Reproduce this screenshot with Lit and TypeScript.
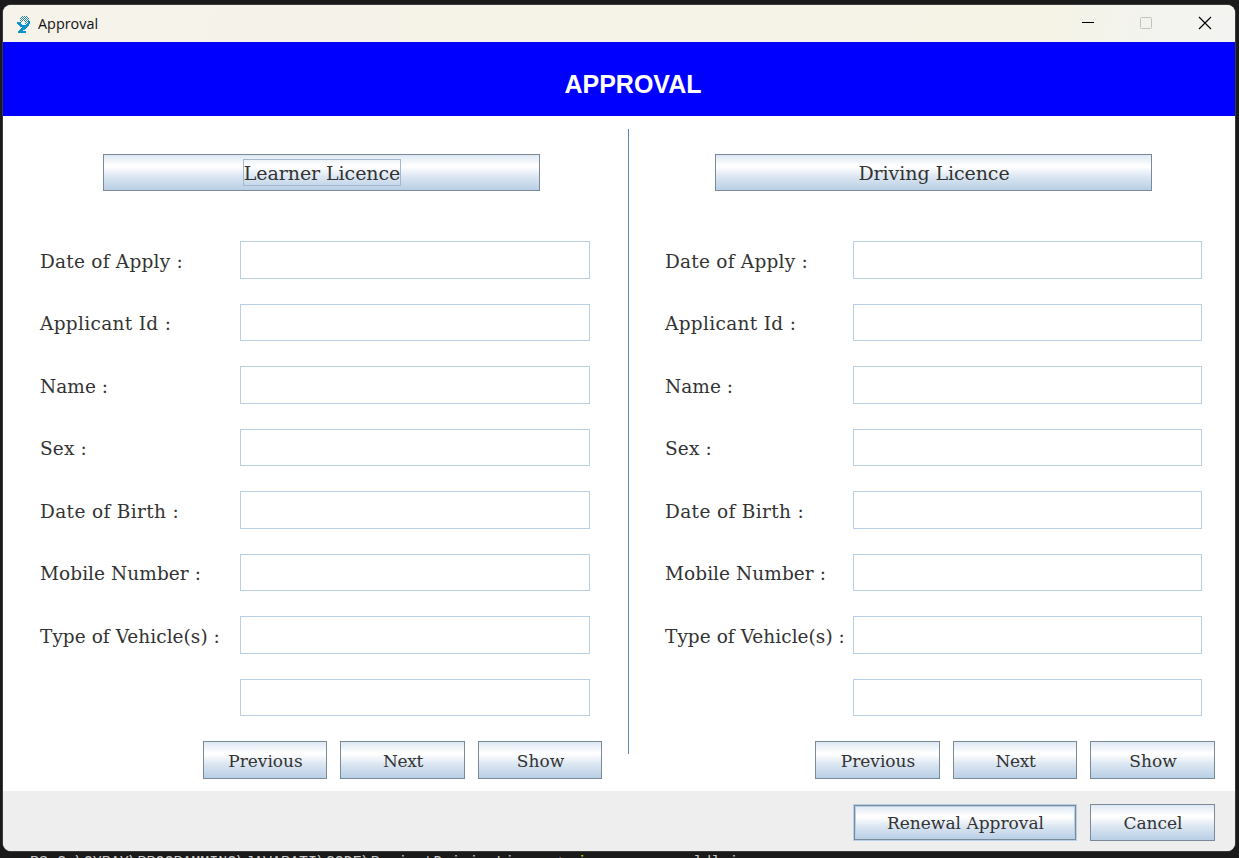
import { LitElement, html, css, svg } from "lit";
import { customElement, property } from "lit/decorators.js";

interface Fit { text: string; ls: number }

const LABELS: Fit[] = [
  { text: "Date of Apply :", ls: 0.23 },
  { text: "Applicant Id :", ls: 0.32 },
  { text: "Name :", ls: 0.05 },
  { text: "Sex :", ls: 0.15 },
  { text: "Date of Birth :", ls: 0.36 },
  { text: "Mobile Number :", ls: 0.07 },
  { text: "Type of Vehicle(s) :", ls: 0.04 },
  { text: "", ls: 0 },
];

@customElement("swing-button")
export class SwingButton extends LitElement {
  @property() label = "";
  @property({ type: Boolean, reflect: true }) focused = false;
  @property({ type: Boolean, reflect: true }) primary = false;
  @property({ type: Number }) spacing = 0;
  static styles = css`
    :host { display: block; }
    .btn {
      box-sizing: border-box; width: 100%; height: 100%; margin: 0; padding: 0 0 0 1px;
      border: 1px solid #7a8a99; border-radius: 0;
      background: linear-gradient(180deg, #dde8f3 0%, #ffffff 30%, #ffffff 34%, #dbe6f2 62%, #b8cfe5 100%);
      display: flex; align-items: center; justify-content: center;
      font: var(--btn-size, 17px) "DejaVu Serif", serif; color: #333; white-space: nowrap;
    }
    :host([primary]) .btn { box-shadow: inset 0 0 0 1px #b8cfe5, 0 0 0 1px #b8cfe5; }
    .txt { line-height: 23px; padding-top: var(--txt-drop, 2px); border: 1px solid transparent; }
    :host([focused]) .txt { border-color: #a3b8cc; }
  `;
  render() {
    return html`<button class="btn"><span class="txt" style="letter-spacing:${this.spacing}px">${this.label}</span></button>`;
  }
}

@customElement("licence-form")
export class LicenceForm extends LitElement {
  @property() heading = "";
  @property({ type: Boolean }) focusedHeading = false;
  static styles = css`
    :host { display: flex; flex-direction: column; }
    .head { --btn-size: 19px; height: 37px; width: var(--head-w); margin: 38px 0 50px var(--head-x); }
    .rows { display: flex; flex-direction: column; gap: 25px; margin-left: var(--rows-x); }
    .row { display: grid; grid-template-columns: var(--label-w) var(--field-w); height: 37.5px; align-items: center; }
    .label { font: 18.5px "DejaVu Serif", serif; color: #333; white-space: nowrap; line-height: 30px; padding-top: 4px; }
    .field { box-sizing: border-box; width: 100%; height: 37.5px; border: 1px solid #b8cfe5; background: #fff; border-radius: 0; padding: 0 4px; margin: 0; outline: none; font: 18px "DejaVu Serif", serif; }
    .actions { display: flex; gap: 13px; margin: 25px 0 0 var(--act-x); height: 37.5px; --txt-drop: 4px; }
    .actions swing-button { width: 124.5px; height: 37.5px; }
  `;
  render() {
    return html`
      <swing-button class="head" .label=${this.heading} .spacing=${-0.08} ?focused=${this.focusedHeading}></swing-button>
      <div class="rows">
        ${LABELS.map(l => html`<div class="row">
          <span class="label" style="letter-spacing:${l.ls}px">${l.text}</span><input class="field" />
        </div>`)}
      </div>
      <div class="actions">
        <swing-button label="Previous"></swing-button>
        <swing-button label="Next" spacing="-0.3"></swing-button>
        <swing-button label="Show"></swing-button>
      </div>`;
  }
}

// Pixel map of the application icon: '#' solid, '.' dithered.
const ICON = [
  "     . . .   ",
  "    . . . .  ",
  "   . . . . . ",
  "    . . . .  ",
  "   . . . . . ",
  "    #   . .##",
  "####     . ##",
  "####    . ###",
  " ####    ### ",
  "  ########## ",
  "   ########  ",
  "     #####   ",
  "    #####    ",
  "   #####     ",
  "  ####       ",
  " ########    ",
  " ########    ",
];

@customElement("app-root")
export class AppRoot extends LitElement {
  static styles = css`
    :host { display: block; width: 1239px; height: 858px; overflow: hidden; }
    .desk { position: relative; box-sizing: border-box; width: 1239px; height: 858px; padding: 5px 4px 0 3px; background: #1a1a1a; }
    .window { height: 846px; border-radius: 8px; overflow: hidden; background: #fff; box-shadow: 0 0 0 1px #3a3c3a; display: flex; flex-direction: column; }
    .title { height: 37px; flex: none; display: flex; align-items: center; background: linear-gradient(100deg, #f5f3ea 0%, #f5f3e6 85%, #f3f3ee 92%, #f3f3f1 100%); }
    .icon { width: 13px; height: 17px; margin: 2px 0 0 14px; flex: none; }
    .name { font: 14.4px "Open Sans", "Noto Sans", sans-serif; color: #111; margin-left: 8px; flex: 1; }
    .controls { width: 174px; height: 37px; flex: none; }
    .banner { height: 74px; flex: none; background: #00f; display: flex; justify-content: center; color: #fff; font: bold 25px/30px "Liberation Sans", sans-serif; padding: 27px 0 0 28px; box-sizing: border-box; }
    .panels { height: 675px; flex: none; display: flex; }
    .left { width: 625px; --head-x: 100px; --head-w: 437px; --rows-x: 37px; --label-w: 200px; --field-w: 350px; --act-x: 199.75px; }
    .right { width: 606px; --head-x: 86px; --head-w: 437px; --rows-x: 36px; --label-w: 187.5px; --field-w: 349.5px; --act-x: 186.25px; }
    .divider { width: 1px; height: 625px; margin-top: 13px; background: #6382bf; flex: none; }
    .footer { flex: 1; background: #eee; display: flex; justify-content: flex-end; padding: 13px 20px 0 0; gap: 14px; }
    .renew { width: 222px; height: 35px; margin-top: 1px; }
    .cancel { width: 125px; height: 37px; }
    .terminal { height: 7px; overflow: hidden; padding-left: 27px; }
    .line { font: 14.95px/18px "Liberation Mono", monospace; color: #ccc; white-space: pre; margin-top: 2px; }
    .cmd { color: #e5e510; }
  `;
  render() {
    const px = ICON.flatMap((r, y) => [...r].map((c, x) =>
      c === " " ? "" : svg`<rect x=${x} y=${y} width="1" height="1" fill=${c === "#" ? "#0c93cc" : "#2b83a6"}></rect>`));
    return html`<div class="desk">
      <div class="window">
        <div class="title">
          <svg class="icon" viewBox="0 0 13 17" shape-rendering="crispEdges">${px}</svg>
          <span class="name">Approval</span>
          <svg class="controls" viewBox="1061 5 174 37" fill="none">
            <path d="M1082 22.5h12" stroke="#000"/>
            <rect x="1140.5" y="17.5" width="11" height="11" rx="1" stroke="#c3c3bc"/>
            <path d="M1199 17l12 12M1211 17l-12 12" stroke="#000" stroke-width="1.15"/>
          </svg>
        </div>
        <div class="banner">APPROVAL</div>
        <div class="panels">
          <licence-form class="left" heading="Learner Licence" .focusedHeading=${true}></licence-form>
          <div class="divider"></div>
          <licence-form class="right" heading="Driving Licence"></licence-form>
        </div>
        <div class="footer">
          <swing-button class="renew" label="Renewal Approval" primary></swing-button>
          <swing-button class="cancel" label="Cancel"></swing-button>
        </div>
      </div>
      <div class="terminal"><div class="line">PS C:\\GYRAY\\PROGRAMMING\\JAVARATI\\CODE\\ProjectDrivingLicence&gt; <span class="cmd">java</span> com.mysqldl.i</div></div>
    </div>`;
  }
}
